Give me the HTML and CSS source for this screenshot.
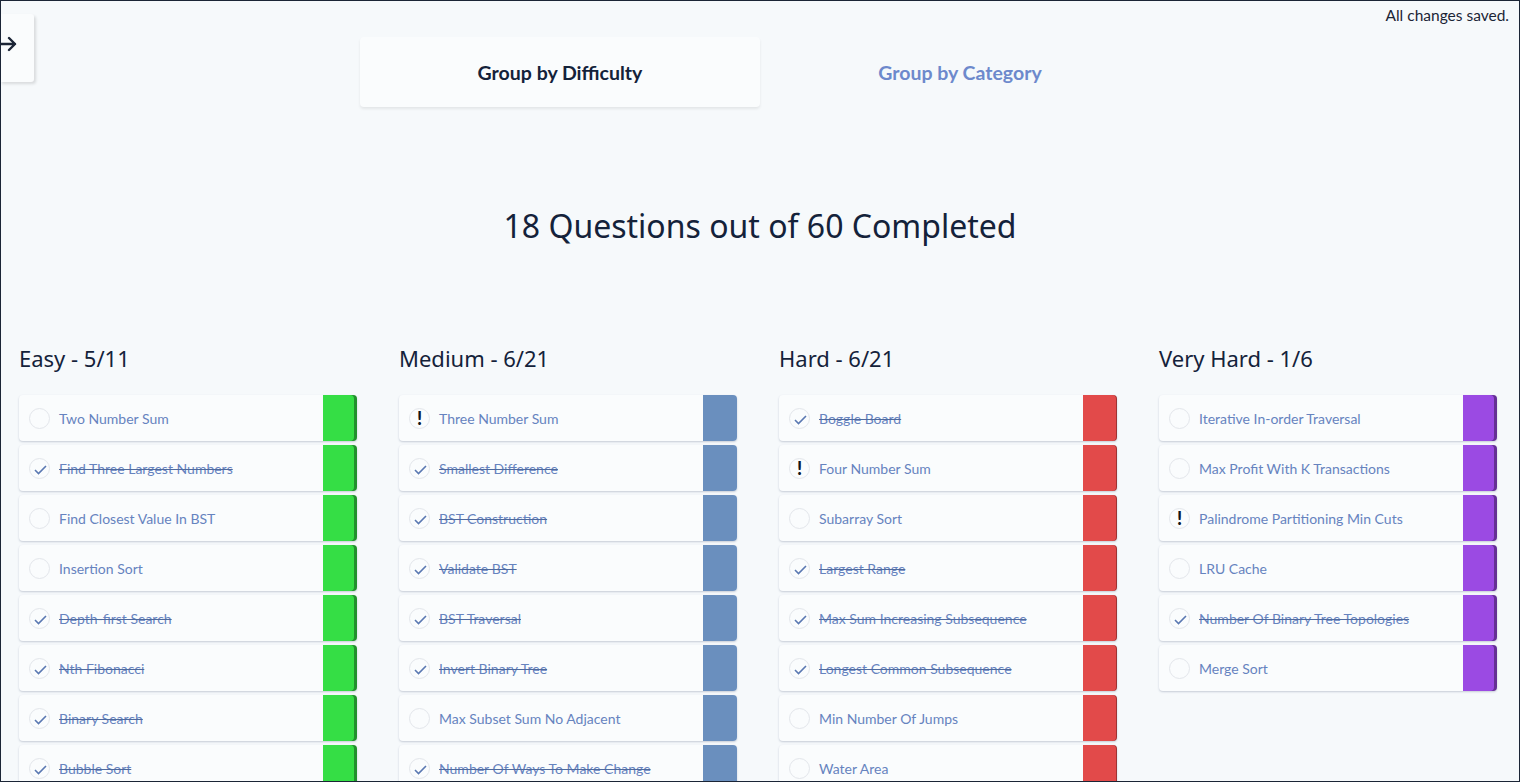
FILE: index.html
```html
<!DOCTYPE html>
<html>
<head>
<meta charset="utf-8">
<link rel="stylesheet" href="styles.css">
</head>
<body>
<div class="frame">
  <button class="toggle" aria-label="open">
    <svg width="20" height="20" viewBox="0 0 20 20"><path d="M0 10 H15 M9 4 L15 10 L9 16" fill="none" stroke="#1b2536" stroke-width="2.4" stroke-linecap="round" stroke-linejoin="round"/></svg>
  </button>
  <div class="saved">All changes saved.</div>
  <div class="tabs">
    <div class="tab active">Group by Difficulty</div>
    <div class="tab">Group by Category</div>
  </div>
  <h1 class="summary">18 Questions out of 60 Completed</h1>
  <div class="columns">
    <section class="col easy">
      <h2>Easy - 5/11</h2>
      <div class="card"><span class="st"></span><span class="name">Two Number Sum</span><span class="bar"></span></div>
      <div class="card done"><span class="st"></span><span class="name">Find Three Largest Numbers</span><span class="bar"></span></div>
      <div class="card"><span class="st"></span><span class="name">Find Closest Value In BST</span><span class="bar"></span></div>
      <div class="card"><span class="st"></span><span class="name">Insertion Sort</span><span class="bar"></span></div>
      <div class="card done"><span class="st"></span><span class="name">Depth-first Search</span><span class="bar"></span></div>
      <div class="card done"><span class="st"></span><span class="name">Nth Fibonacci</span><span class="bar"></span></div>
      <div class="card done"><span class="st"></span><span class="name">Binary Search</span><span class="bar"></span></div>
      <div class="card done"><span class="st"></span><span class="name">Bubble Sort</span><span class="bar"></span></div>
    </section>
    <section class="col medium">
      <h2>Medium - 6/21</h2>
      <div class="card flag"><span class="st">!</span><span class="name">Three Number Sum</span><span class="bar"></span></div>
      <div class="card done"><span class="st"></span><span class="name">Smallest Difference</span><span class="bar"></span></div>
      <div class="card done"><span class="st"></span><span class="name">BST Construction</span><span class="bar"></span></div>
      <div class="card done"><span class="st"></span><span class="name">Validate BST</span><span class="bar"></span></div>
      <div class="card done"><span class="st"></span><span class="name">BST Traversal</span><span class="bar"></span></div>
      <div class="card done"><span class="st"></span><span class="name">Invert Binary Tree</span><span class="bar"></span></div>
      <div class="card"><span class="st"></span><span class="name">Max Subset Sum No Adjacent</span><span class="bar"></span></div>
      <div class="card done"><span class="st"></span><span class="name">Number Of Ways To Make Change</span><span class="bar"></span></div>
    </section>
    <section class="col hard">
      <h2>Hard - 6/21</h2>
      <div class="card done"><span class="st"></span><span class="name">Boggle Board</span><span class="bar"></span></div>
      <div class="card flag"><span class="st">!</span><span class="name">Four Number Sum</span><span class="bar"></span></div>
      <div class="card"><span class="st"></span><span class="name">Subarray Sort</span><span class="bar"></span></div>
      <div class="card done"><span class="st"></span><span class="name">Largest Range</span><span class="bar"></span></div>
      <div class="card done"><span class="st"></span><span class="name">Max Sum Increasing Subsequence</span><span class="bar"></span></div>
      <div class="card done"><span class="st"></span><span class="name">Longest Common Subsequence</span><span class="bar"></span></div>
      <div class="card"><span class="st"></span><span class="name">Min Number Of Jumps</span><span class="bar"></span></div>
      <div class="card"><span class="st"></span><span class="name">Water Area</span><span class="bar"></span></div>
    </section>
    <section class="col vhard">
      <h2>Very Hard - 1/6</h2>
      <div class="card"><span class="st"></span><span class="name">Iterative In-order Traversal</span><span class="bar"></span></div>
      <div class="card"><span class="st"></span><span class="name">Max Profit With K Transactions</span><span class="bar"></span></div>
      <div class="card flag"><span class="st">!</span><span class="name">Palindrome Partitioning Min Cuts</span><span class="bar"></span></div>
      <div class="card"><span class="st"></span><span class="name">LRU Cache</span><span class="bar"></span></div>
      <div class="card done"><span class="st"></span><span class="name">Number Of Binary Tree Topologies</span><span class="bar"></span></div>
      <div class="card"><span class="st"></span><span class="name">Merge Sort</span><span class="bar"></span></div>
    </section>
  </div>
</div>
</body>
</html>
```
FILE: styles.css
```css
* { box-sizing: border-box; }
html, body { margin: 0; padding: 0; }
body {
  font-family: Lato, "Open Sans", sans-serif;
  background: #f6f9fb;
}
.frame {
  position: relative;
  width: 1520px;
  height: 782px;
  border: 1px solid #1b2536;
  overflow: hidden;
  background: #f6f9fb;
  padding-top: 36px;
}
.toggle {
  position: absolute;
  left: -1px;
  top: 13px;
  width: 34px;
  height: 68px;
  border: none;
  border-radius: 0 3px 3px 0;
  background: #fafcfd;
  box-shadow: 2px 2px 3px rgba(0,0,0,0.12);
  padding: 0;
  display: flex;
  align-items: center;
  justify-content: flex-start;
}
.toggle svg { margin-top: -8px; }
.saved {
  position: absolute;
  right: 10px;
  top: 5px;
  font-size: 15.5px;
  color: #1b2536;
}
.tabs {
  display: flex;
  justify-content: center;
}
.tab {
  width: 400px;
  height: 70px;
  display: flex;
  align-items: center;
  justify-content: center;
  font-size: 19.5px;
  font-weight: 700;
  color: #6d89cc;
  border-radius: 4px;
}
.tab.active {
  background: #fafcfd;
  color: #14223a;
  box-shadow: 0 2px 3px rgba(0,0,0,0.08);
}
.summary {
  margin: 99px 0 0;
  text-align: center;
  font-family: "Noto Sans", sans-serif;
  font-weight: 400;
  font-size: 32px;
  line-height: 40px;
  color: #14223a;
}
.columns {
  display: grid;
  grid-template-columns: repeat(4, 338px);
  column-gap: 42px;
  padding-left: 18px;
  margin-top: 97px;
}
.col h2 {
  margin: 0 0 22px;
  font-family: "Noto Sans", sans-serif;
  font-weight: 400;
  font-size: 22px;
  line-height: 30px;
  color: #14223a;
}
.card {
  display: flex;
  align-items: center;
  height: 46px;
  margin-bottom: 4px;
  background: #fafcfd;
  border-radius: 4px;
  box-shadow: 0 1px 2px rgba(60,70,110,0.25);
  padding-left: 10px;
}
.st {
  width: 21px;
  height: 21px;
  border-radius: 50%;
  border: 1px solid #e3e6eb;
  flex: none;
  display: flex;
  align-items: center;
  justify-content: center;
  font-size: 18px;
  font-weight: 900;
  color: #0d1522;
  line-height: 1;
}
.done .st {
  background-image: url("data:image/svg+xml,%3Csvg xmlns='http://www.w3.org/2000/svg' width='21' height='21' viewBox='0 0 21 21'%3E%3Cpath d='M5 11 L8.5 14.5 L16 7' fill='none' stroke='%235a78b2' stroke-width='1.6'/%3E%3C/svg%3E");
}
.name {
  flex: 1;
  margin-left: 9px;
  font-size: 14px;
  color: #6683bf;
}
.done .name {
  text-decoration: line-through;
  text-decoration-color: #4f6a9e;
}
.bar {
  width: 34px;
  height: 46px;
  flex: none;
  border-radius: 0 4px 4px 0;
}
.easy .bar { background: #35de45; box-shadow: inset -3px 0 0 rgba(0,0,0,0.35); }
.medium .bar { background: #6a8fbe; }
.hard .bar { background: #e24a4a; box-shadow: inset -1px 0 0 rgba(0,0,0,0.3); }
.vhard .bar { background: #9b4ae3; box-shadow: inset -3px 0 0 rgba(0,0,0,0.35); }
```
